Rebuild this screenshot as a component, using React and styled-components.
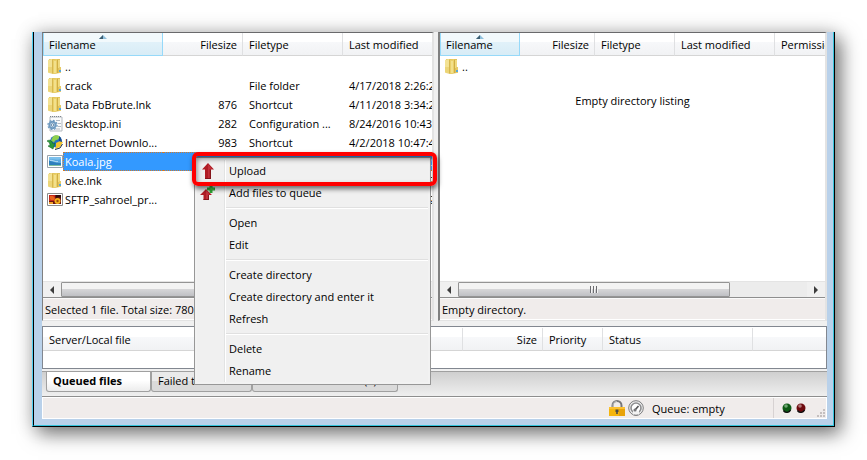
/* eslint-disable */
import React, { useState } from "react";
import styled, { createGlobalStyle, css } from "styled-components";

const GlobalStyle = createGlobalStyle`
  * {
    box-sizing: border-box;
  }

  body {
    margin: 0;
    background: #ffffff;
    color: #000000;
    font-family: "Open Sans", "Noto Sans", sans-serif;
    font-size: 11px;
    line-height: 18px;
  }

  button {
    font: inherit;
    color: inherit;
  }
`;

const Page = styled.div`
  display: flex;
  min-height: 100vh;
  padding: 32px 32px 33px;
  overflow: hidden;
`;

const Window = styled.main`
  position: relative;
  flex: 1;
  min-width: 0;
  display: flex;
  border: solid #000000;
  border-width: 0 1px 1px 0;
  border-left: 1px solid #4fd0f5;
  box-shadow: 6px 7px 18px rgba(0, 0, 0, 0.5), 0 0 18px rgba(0, 0, 0, 0.16);
`;

const Frame = styled.div`
  flex: 1;
  min-width: 0;
  display: flex;
  flex-direction: column;
  padding: 0 6px 6px 8px;
  background: #b9d1ea;
  border-left: 1px solid #000000;
  border-right: 1px solid #35c4dc;
  border-bottom: 1px solid #35c4dc;
`;

const Client = styled.div`
  flex: 1;
  min-width: 0;
  display: flex;
  flex-direction: column;
  background: #f0f0f0;
`;

const Panes = styled.div`
  flex: 1;
  display: grid;
  grid-template-columns: minmax(0, 392fr) minmax(0, 389fr);
  column-gap: 4px;
`;

const Pane = styled.section`
  display: flex;
  flex-direction: column;
  border: solid #e3e3e3;
  border-width: 1px 2px 1px 1px;
  border-top-color: #69696b;
  border-left: ${(props) => (props.$wide ? 2 : 1)}px solid #808080;
  background: #ffffff;
`;

const ListArea = styled.div`
  flex: 1;
  overflow: hidden;
`;

const Table = styled.table`
  width: 100%;
  table-layout: fixed;
  border-collapse: separate;
  border-spacing: 0;
`;

const HeadCell = styled.th`
  width: ${(props) => (props.$width ? `${props.$width}px` : "auto")};
  padding: 0 0 1px;
  font-weight: 400;
  text-align: ${(props) => (props.$right ? "right" : "left")};
`;

const HeadLabel = styled.div`
  position: relative;
  height: 23px;
  padding: 3px 5px 0 6px;
  overflow: hidden;
  white-space: nowrap;
  border-right: 1px solid #dfe0e2;
  border-bottom: 1px solid #d5d5d5;
  background: linear-gradient(#ffffff 42%, #f7f8fa 42%, #f1f2f4);

  ${(props) =>
    props.$last &&
    css`
      border-right: none;
    `}

  ${(props) =>
    props.$sorted &&
    css`
      padding-left: 5px;
      border: 1px solid #96d9f9;
      border-top: none;
      background: linear-gradient(#f2f9fc 42%, #e1f1f9 42%, #d8ecf6);
    `}
`;

const SortMark = styled.svg`
  position: absolute;
  top: 2px;
  left: calc(50% - 4px);
`;

const Row = styled.tr`
  height: 19px;
`;

const Cell = styled.td`
  height: 19px;
  padding: 0 0 0 6px;
  overflow: hidden;
  white-space: nowrap;
  line-height: 19px;
  text-align: ${(props) => (props.$right ? "right" : "left")};
  padding-right: ${(props) => (props.$right ? 6 : 0)}px;

  ${(props) =>
    props.$selected &&
    css`
      color: #ffffff;
      background: #3399ff;
      border: dotted #d07a2a;
      border-width: 1px 0;
      line-height: 17px;
    `}
`;

const NameCell = styled.td`
  height: 19px;
  padding: 0 0 0 4px;
`;

const NameBox = styled.div`
  display: flex;
  align-items: center;

  svg {
    flex: none;
  }
`;

const Name = styled.span`
  flex: 1;
  height: 19px;
  padding: 0 2px;
  overflow: hidden;
  white-space: nowrap;
  line-height: 19px;

  ${(props) =>
    props.$selected &&
    css`
      color: #ffffff;
      background: #3399ff;
      border: dotted #d07a2a;
      border-width: 1px 0 1px 1px;
      padding-left: 1px;
      line-height: 17px;
    `}
`;

const EmptyText = styled.p`
  margin: 16px 0 0;
  text-align: center;
`;

const ScrollBar = styled.div`
  display: flex;
  height: 17px;
  background: #ececec;
  border-top: 1px solid #e4e4e4;
  border-bottom: 1px solid #8e8e8e;
`;

const ScrollButton = styled.button`
  display: flex;
  align-items: center;
  justify-content: center;
  width: 18px;
  padding: 0;
  border: none;
  background: #f0f0f0;
`;

const ScrollTrack = styled.div`
  flex: 1;
  display: flex;
`;

const ScrollThumb = styled.div`
  display: flex;
  align-items: center;
  justify-content: center;
  width: ${(props) => props.$size}%;
  border: 1px solid #949494;
  border-radius: 1px;
  background: linear-gradient(#f3f3f3 45%, #d5d5d7 50%, #bfc0c4);
`;

const PaneStatus = styled.div`
  height: 22px;
  padding: 2px 2px 0;
  overflow: hidden;
  white-space: nowrap;
  background: #f0eceb;
  border-top: 1px solid #fafafa;
  border-bottom: 1px solid #ffffff;
`;

const Queue = styled.section`
  height: 43px;
  margin-top: 5px;
  padding-top: 1px;
  border: 1px solid #828790;
  background: #ffffff;
`;

const TabStrip = styled.div`
  display: flex;
  align-items: flex-start;
  height: 26px;
  margin-top: 2px;
  padding-left: 4px;
  border-top: 1px solid #a0a0a0;
  border-bottom: 1px solid #8e8e8e;
  background: linear-gradient(#cfcfcf, #efefef);
`;

const Tab = styled.button`
  display: flex;
  align-items: flex-start;
  width: ${(props) => props.$width}px;
  height: 20px;
  padding: 0 6px;
  overflow: hidden;
  white-space: nowrap;
  line-height: 17px;
  border: solid #a0a0a0;
  border-width: 0 1px 1px;
  border-radius: 0 0 3px 3px;
  background: linear-gradient(#eaeaea 45%, #dadada 45%);

  ${(props) =>
    props.$active &&
    css`
      font-weight: 700;
      background: linear-gradient(#ffffff 45%, #ececec);
    `}
`;

const StatusBar = styled.footer`
  display: flex;
  align-items: center;
  justify-content: flex-end;
  height: 22px;
  border: 1px solid #ffffff;
  background: #f0eceb;
`;

const StatusItems = styled.div`
  display: flex;
  align-items: center;
  gap: 3px;
  width: 164px;
`;

const QueueText = styled.span`
  padding: 1px 0 0 5px;
`;

const Lights = styled.div`
  display: flex;
  align-items: center;
  align-self: stretch;
  gap: 4px;
  width: 53px;
  padding-left: 8px;
  border-left: 1px solid #d7d2d2;
`;

const Grip = styled.svg`
  align-self: flex-end;
  margin-left: auto;
`;

const Menu = styled.div`
  position: absolute;
  top: 125px;
  left: 161px;
  width: 237px;
  padding: 2px;
  border: 1px solid #979797;
  background: linear-gradient(to right, #f0f0f0 27px, #e2e3e3 27px, #e2e3e3 28px, #ffffff 28px, #ffffff 29px, #f0f0f0 29px) content-box, #f2f2f2;
`;

const MenuItem = styled.button`
  display: flex;
  align-items: center;
  width: 100%;
  height: 22px;
  padding: 0 0 0 3px;
  border: none;
  background: transparent;
  text-align: left;

  &:hover {
    background: rgba(120, 170, 230, 0.2);
  }
`;

const MenuIcon = styled.span`
  flex: none;
  display: flex;
  width: 29px;
`;

const MenuRule = styled.hr`
  height: 2px;
  margin: 3px 0 3px 29px;
  border: solid;
  border-width: 1px 0;
  border-color: #e0e0e0 transparent #ffffff;
`;

const Highlight = styled.div`
  position: absolute;
  top: 120px;
  left: 159px;
  width: 245px;
  height: 34px;
  border: 4px solid #ff0000;
  border-radius: 6px;
  pointer-events: none;
  box-shadow: 1px 3px 5px rgba(0, 0, 0, 0.55), inset 1px 3px 5px rgba(0, 0, 0, 0.45);
`;

const FolderIcon = () => (
  <svg width="16" height="17" viewBox="0 0 16 17">
    <path d="M2 1h11v14l-6 1-5-1z" fill="#e0c25a" />
    <path d="M1 2l4-1v14l-4-.6z" fill="#f3e294" />
    <path d="M1 9h4v6l-4-.6z" fill="#ecd577" />
    <path d="M5 2h1v13.500H5z" fill="#d6b74e" />
    <path d="M6 2l4-1v14l-3 1-1-.6z" fill="#ead06a" />
    <path d="M7 3h2v12H7z" fill="#f2e08c" />
    <path d="M10 2h1v13h-1z" fill="#d0ae44" />
    <path d="M11 2h2v8h-2z" fill="#f0da80" />
    <path d="M12 9h2v6h-2z" fill="#e6ca68" />
    <path d="M12 12h2v2h-2z" fill="#58a8dc" />
  </svg>
);

const IniIcon = () => (
  <svg width="16" height="17" viewBox="0 0 16 17">
    <path d="M3 2h12v14H3z" fill="#fafbfc" stroke="#b4bac0" />
    <path d="M3 1.500h1m1 0h1m1 0h1m1 0h1m1 0h1m1 0h1" stroke="#7d858e" />
    <path d="M9 5.500h4M11 8.500h3M11 11.500h3M9 14h4" stroke="#b3bac4" />
    <circle cx="5.500" cy="10" r="3.200" fill="#cfe0ee" stroke="#6f9ac0" strokeWidth="2" />
    <circle cx="5.500" cy="10" r="4.600" fill="none" stroke="#6f9ac0" strokeWidth="1.200" strokeDasharray="1.800 1.800" />
    <circle cx="5.500" cy="10" r="1.300" fill="#ffffff" stroke="#4a7499" strokeWidth=".8" />
  </svg>
);

const GlobeIcon = () => (
  <svg width="16" height="17" viewBox="0 0 16 17">
    <circle cx="9" cy="7.500" r="6" fill="#2470c0" />
    <path d="M6 2.500c3-2 5-1 7 0l-2 3-3 1-1 2-3-2z" fill="#8fd04c" />
    <path d="M0 7c3-2 5 0 6 3l2-1-2 6-5-3 2-.5C3 9 2 8 0 7z" fill="#2c9a3a" stroke="#17682a" strokeWidth=".6" />
    <path d="M9 9l4-2 3 1-3 5-5 2 1-3z" fill="#f4c630" />
    <path d="M12 2l2 2 1 4-3-1z" fill="#154a8c" />
    <path d="M8 15.500l5-1.500 2.500-4" stroke="#1e3352" fill="none" />
  </svg>
);

const ImageIcon = () => (
  <svg width="16" height="17" viewBox="0 0 16 17">
    <path d="M.5 2.500h15v12H.5z" fill="#ffffff" stroke="#9aa3ab" />
    <path d="M2 4h12v9H2z" fill="#5ba9e0" />
    <path d="M2 4h12v2c-4 2-8-1-12 1z" fill="#7cc0ec" />
    <path d="M2 8c3 0 5 2 12 2v3H2z" fill="#2f80bc" />
    <path d="M3 7.500c3-1 5 2 8 1" stroke="#b4dcf4" fill="none" />
    <path d="M2 12h12v1H2z" fill="#7fc0a0" />
  </svg>
);

const SftpIcon = () => (
  <svg width="16" height="17" viewBox="0 0 16 17">
    <path d="M.5 2.500h15v12H.5z" fill="#ffffff" stroke="#8b8b8b" />
    <path d="M2 4h12v9H2z" fill="#6c1410" />
    <path d="M2 4h6v6H2z" fill="#c8281a" />
    <path d="M3 5h3l2 2-1 2H4L3 8z" fill="#e8641e" />
    <circle cx="10.500" cy="10" r="3" fill="#f4b21c" />
    <circle cx="10.500" cy="10" r="1.200" fill="#9a4a0c" />
    <path d="M9 4h5v3l-2-1-3 1z" fill="#30100c" />
    <path d="M2 11h4v2H2z" fill="#f0a028" />
  </svg>
);

const UploadIcon = () => (
  <svg width="18" height="16" viewBox="0 0 18 16">
    <path d="M8 0l6 6.500h-3V16H5V6.500H2z" fill="#b01c24" />
    <path d="M8 1l4 5H9.500v9H8z" fill="#c0303a" />
    <path d="M10 7h1v9H5v-1h5z" fill="#84141a" />
  </svg>
);

const AddQueueIcon = () => (
  <svg width="18" height="16" viewBox="0 0 18 16">
    <path d="M6 4l6 6H9v5H3.500v-5H0z" fill="#b01c24" />
    <path d="M6 5l4 4.500H8V14H6z" fill="#c0303a" />
    <path d="M8 10h1v5H3.500v-1H8z" fill="#84141a" />
    <path d="M9.500 0h3v2.500H15v3h-2.500V8h-3V5.500H7v-3h2.500z" fill="#2da534" />
    <path d="M10.500 1h1v2.500H14v1h-3.500z" fill="#5cc850" />
  </svg>
);

const LockIcon = () => (
  <svg width="16" height="17" viewBox="0 0 16 17">
    <path d="M3.500 8V5.500a4.500 4.500 0 0 1 9 0V8" fill="none" stroke="#77777a" strokeWidth="2" />
    <path d="M4 7V5.500A3.500 3.500 0 0 1 8 1.500" fill="none" stroke="#c8c8ca" strokeWidth=".8" />
    <path d="M0 7h16v9H0z" fill="#f5b50e" />
    <path d="M0 7h16v2H0z" fill="#fcc030" />
    <path d="M10 9h6v7h-6z" fill="#e8a30a" />
    <path d="M6.500 9.500h3V12h-.7v2H7.200v-2h-.7z" fill="#4b4a46" />
  </svg>
);

const GaugeIcon = () => (
  <svg width="16" height="16" viewBox="0 0 16 16">
    <circle cx="8" cy="8" r="7.300" fill="#f2f2f2" stroke="#7c7c7e" />
    <circle cx="8" cy="8" r="5" fill="#ffffff" stroke="#8e8e90" strokeWidth="1.600" />
    <path d="M5 11h6v4H5z" fill="#f2f2f2" />
    <path d="M5.500 14.800a7.300 7.300 0 0 0 5 0" fill="none" stroke="#7c7c7e" />
    <path d="M7 10l3.500-4" stroke="#555557" strokeWidth="1.600" />
    <circle cx="7" cy="10" r="1.600" fill="#77777a" />
  </svg>
);

const Light = ({ color, shine }) => (
  <svg width="10" height="10" viewBox="0 0 10 10">
    <circle cx="5" cy="5" r="4.500" fill={color} />
    <circle cx="4" cy="3" r="1.800" fill={shine} />
    <path d="M1.500 7.500a4 4 0 0 0 7-.5" fill="none" stroke="#111111" strokeWidth="1.400" />
  </svg>
);

const Arrow = ({ flip }) => (
  <svg width="4" height="8" viewBox="0 0 4 8">
    <path d={flip ? "M0 0l4 4-4 4z" : "M4 0L0 4l4 4z"} fill="#3c3c3c" />
  </svg>
);

const GripLines = () => (
  <svg width="8" height="7" viewBox="0 0 8 7">
    <path d="M.5 0v7M3.500 0v7M6.500 0v7" stroke="#6b6b6f" />
    <path d="M1.500 0v7M4.500 0v7M7.500 0v7" stroke="#f4f4f4" />
  </svg>
);

const localColumns = [
  { title: "Filename", width: 120, sorted: true },
  { title: "Filesize", width: 80, right: true },
  { title: "Filetype", width: 100 },
  { title: "Last modified" },
];

const remoteColumns = [
  { title: "Filename", width: 80, sorted: true },
  { title: "Filesize", width: 75, right: true },
  { title: "Filetype", width: 80 },
  { title: "Last modified", width: 100 },
  { title: "Permissions" },
];

const queueColumns = [
  { title: "Server/Local file", width: 180 },
  { title: "Direction", width: 60 },
  { title: "Remote file", width: 180 },
  { title: "Size", width: 80, right: true },
  { title: "Priority", width: 60 },
  { title: "Status", width: 150 },
  { title: "" },
];

const localFiles = [
  { icon: FolderIcon, name: ".." },
  { icon: FolderIcon, name: "crack", type: "File folder", date: "4/17/2018 2:26:27 PM" },
  { icon: FolderIcon, name: "Data FbBrute.lnk", size: "876", type: "Shortcut", date: "4/11/2018 3:34:25 PM" },
  { icon: IniIcon, name: "desktop.ini", size: "282", type: "Configuration ...", date: "8/24/2016 10:43:11 AM" },
  { icon: GlobeIcon, name: "Internet Downlo...", size: "983", type: "Shortcut", date: "4/2/2018 10:47:40 AM" },
  { icon: ImageIcon, name: "Koala.jpg", size: "780,831", type: "JPEG image", date: "7/14/2009 12:32:31 PM" },
  { icon: FolderIcon, name: "oke.lnk", size: "612", type: "Shortcut", date: "4/11/2018 3:32:22 PM" },
  { icon: SftpIcon, name: "SFTP_sahroel_pr...", size: "48,210", type: "PNG image", date: "4/17/2018 2:22:25 PM" },
];

const remoteFiles = [{ icon: FolderIcon, name: ".." }];

const menuItems = [
  { label: "Upload", icon: UploadIcon },
  { label: "Add files to queue", icon: AddQueueIcon },
  null,
  { label: "Open" },
  { label: "Edit" },
  null,
  { label: "Create directory" },
  { label: "Create directory and enter it" },
  { label: "Refresh" },
  null,
  { label: "Delete" },
  { label: "Rename" },
];

const tabs = [
  { label: "Queued files", width: 105 },
  { label: "Failed transfers", width: 101 },
  { label: "Successful transfers (1)", width: 146 },
];

const Head = ({ columns }) => (
  <thead>
    <tr>
      {columns.map((column, index) => (
        <HeadCell key={index} scope="col" $width={column.width} $right={column.right}>
          <HeadLabel $sorted={column.sorted} $last={index === columns.length - 1}>
            {column.sorted && (
              <SortMark width="8" height="4" viewBox="0 0 8 4">
                <path d="M4 0l4 4H0z" fill="#8fc0dc" />
                <path d="M4 0v4H0z" fill="#3c5e72" />
              </SortMark>
            )}
            {column.title}
          </HeadLabel>
        </HeadCell>
      ))}
    </tr>
  </thead>
);

const FileTable = ({ columns, files, selected, onSelect }) => (
  <Table>
    <Head columns={columns} />
    <tbody>
      {files.map((file) => {
        const active = file.name === selected;
        return (
          <Row key={file.name} onClick={() => onSelect && onSelect(file.name)}>
            <NameCell>
              <NameBox>
                <file.icon />
                <Name $selected={active}>{file.name}</Name>
              </NameBox>
            </NameCell>
            <Cell $right $selected={active}>{file.size}</Cell>
            <Cell $selected={active}>{file.type}</Cell>
            <Cell $selected={active}>{file.date}</Cell>
            {columns.length > 4 && <Cell />}
          </Row>
        );
      })}
    </tbody>
  </Table>
);

const HorizontalScroll = ({ size, label }) => (
  <ScrollBar>
    <ScrollButton aria-label={`Scroll ${label} left`}><Arrow /></ScrollButton>
    <ScrollTrack>
      <ScrollThumb $size={size}><GripLines /></ScrollThumb>
    </ScrollTrack>
    <ScrollButton aria-label={`Scroll ${label} right`}><Arrow flip /></ScrollButton>
  </ScrollBar>
);

const App = () => {
  const [selected, setSelected] = useState("Koala.jpg");
  const [tab, setTab] = useState("Queued files");

  return (
    <Page>
      <GlobalStyle />
      <Window>
        <Frame>
          <Client>
            <Panes>
              <Pane>
                <ListArea>
                  <FileTable columns={localColumns} files={localFiles} selected={selected} onSelect={setSelected} />
                </ListArea>
                <HorizontalScroll size={92} label="local files" />
                <PaneStatus>Selected 1 file. Total size: 780,831 bytes</PaneStatus>
              </Pane>
              <Pane $wide>
                <ListArea>
                  <FileTable columns={remoteColumns} files={remoteFiles} />
                  <EmptyText>Empty directory listing</EmptyText>
                </ListArea>
                <HorizontalScroll size={78} label="remote files" />
                <PaneStatus>Empty directory.</PaneStatus>
              </Pane>
            </Panes>
            <Queue>
              <Table>
                <Head columns={queueColumns} />
              </Table>
            </Queue>
            <TabStrip role="tablist">
              {tabs.map((item) => (
                <Tab
                  key={item.label}
                  role="tab"
                  aria-selected={tab === item.label}
                  $width={item.width}
                  $active={tab === item.label}
                  onClick={() => setTab(item.label)}
                >
                  {item.label}
                </Tab>
              ))}
            </TabStrip>
            <StatusBar>
              <StatusItems>
                <LockIcon />
                <GaugeIcon />
                <QueueText>Queue: empty</QueueText>
              </StatusItems>
              <Lights>
                <Light color="#0d5a14" shine="#6fa873" />
                <Light color="#6e0a0e" shine="#b0787a" />
                <Grip width="10" height="10" viewBox="0 0 10 10">
                  <path d="M7 1h2v2H7zM4 4h2v2H4zM7 4h2v2H7zM1 7h2v2H1zM4 7h2v2H4zM7 7h2v2H7z" fill="#c4bfbe" />
                </Grip>
              </Lights>
            </StatusBar>
          </Client>
        </Frame>
        <Menu role="menu">
          {menuItems.map((item, index) =>
            item ? (
              <MenuItem key={index} role="menuitem">
                <MenuIcon>{item.icon && <item.icon />}</MenuIcon>
                {item.label}
              </MenuItem>
            ) : (
              <MenuRule key={index} />
            )
          )}
        </Menu>
        <Highlight />
      </Window>
    </Page>
  );
};

export default App;
